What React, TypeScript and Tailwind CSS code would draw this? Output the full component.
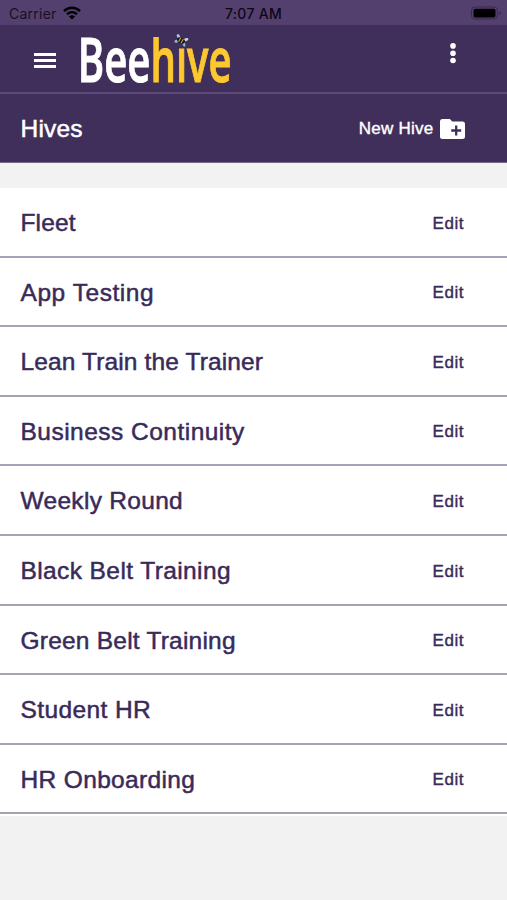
type Hive = { name: string; spacing: string };

const hives: Hive[] = [
  { name: "Fleet", spacing: "tracking-[0.150px]" },
  { name: "App Testing", spacing: "tracking-[0.550px]" },
  { name: "Lean Train the Trainer", spacing: "tracking-[0.130px]" },
  { name: "Business Continuity", spacing: "tracking-[0.480px]" },
  { name: "Weekly Round", spacing: "tracking-[0.3px]" },
  { name: "Black Belt Training", spacing: "tracking-[0.4px]" },
  { name: "Green Belt Training", spacing: "tracking-[0.220px]" },
  { name: "Student HR", spacing: "tracking-[0.4px]" },
  { name: "HR Onboarding", spacing: "tracking-[0.350px]" },
];

function StatusBar() {
  return (
    <div className="flex h-[25px] items-center justify-between bg-[#54406f] pt-[2px] font-['Inter',sans-serif] text-[14px] leading-none text-[#17101f]">
      <div className="flex w-[160px] items-center gap-[6px] pl-[9px]">
        <span className="tracking-[0.250px]">Carrier</span>
        <svg className="-mt-px h-[14px] w-[18px]" viewBox="0 0 18 14" fill="none" stroke="#000" strokeWidth="2.500">
          <path d="M1 5.2C5.6.7 12.4.7 17 5.2" />
          <path d="M4 8.4c2.9-2.8 7.100-2.800 10 0" />
          <path d="M9 13.500 5.900 10.400c1.800-1.600 4.400-1.600 6.200 0z" fill="#000" stroke="none" />
        </svg>
      </div>
      <span className="font-medium tracking-[0.3px] text-[#0d0714]">7:07 AM</span>
      <div className="flex w-[160px] justify-end pr-[5px]">
        <svg className="-mt-px h-[14px] w-[32px]" viewBox="0 0 32 14">
          <rect x="1.500" y="1" width="26" height="12" rx="3.500" fill="none" stroke="#38284d" />
          <rect x="3.500" y="2.700" width="22" height="8.800" rx="1.800" fill="#000" />
          <path d="M29.500 5v4c2-.8 2-3.200 0-4z" fill="#38284d" />
        </svg>
      </div>
    </div>
  );
}

function Logo() {
  return (
    <svg
      className="h-[66px] w-[156px] overflow-visible"
      viewBox="0 0 156 66"
      fontFamily="'Open Sans', 'Noto Sans', sans-serif"
      fontSize="61.500"
      fontWeight="600"
      strokeWidth="1"
    >
      {/* The wordmark's ascenders are trimmed level with its capital */}
      <clipPath id="cap-height">
        <rect x="-4" y="12" width="164" height="50" />
      </clipPath>
      <text x="-.3" y="56.500" textLength="154" lengthAdjust="spacingAndGlyphs" clipPath="url(#cap-height)">
        <tspan fill="#fff" stroke="#fff">Bee</tspan>
        <tspan fill="#fdc72f" stroke="#fdc72f">hıve</tspan>
      </text>
      <g transform="translate(103 15.500) rotate(28)">
        <ellipse cx="-4" cy="-2.300" rx="1.500" ry="2.600" fill="#a6cae3" transform="rotate(-55 -4 -2.300)" />
        <ellipse cx="4" cy="-3" rx="1.500" ry="2.600" fill="#c5d9e7" transform="rotate(40 4 -3)" />
        <ellipse cx="-3.500" cy="2.500" rx="1.400" ry="2.400" fill="#8db8d6" transform="rotate(45 -3.500 2.500)" />
        <ellipse cx="4.500" cy="2" rx="1.300" ry="2.300" fill="#8db8d6" transform="rotate(-45 4.500 2)" />
        <ellipse rx="4.200" ry="2.800" fill="#171923" />
        <path d="M-1.500-2.300v4.600M1.300-2.400v4.800" stroke="#dcac2c" strokeWidth="1" />
      </g>
    </svg>
  );
}

function Header() {
  return (
    <header className="flex h-[69px] items-start border-b-2 border-[#5c4b76] bg-[#412f5b]">
      <button aria-label="Menu" className="mt-[28px] ml-[34px] flex w-[22px] flex-col gap-[3px]">
        <span className="h-[3px] bg-white" />
        <span className="h-[3px] bg-white" />
        <span className="h-[3px] bg-white" />
      </button>
      <div className="ml-[22px]">
        <Logo />
      </div>
      <button aria-label="More" className="mt-[18px] mr-[51px] ml-auto">
        <svg className="h-[21px] w-[6px]" viewBox="0 0 6 21" fill="#fff">
          <circle cx="3" cy="2.900" r="2.800" />
          <circle cx="3" cy="10.200" r="2.800" />
          <circle cx="3" cy="17.500" r="2.800" />
        </svg>
      </button>
    </header>
  );
}

function TitleBar() {
  return (
    <div className="flex h-[69px] items-center justify-between border-b border-[#766989] bg-[#412f5b] pr-[42px] pl-[20.500px] text-white">
      <h1 className="pt-[2px] text-[24.500px] tracking-[0.2px] [-webkit-text-stroke:0.500px]">Hives</h1>
      <button className="flex items-center gap-[6.500px]">
        <span className="pt-[2px] text-[17px] tracking-[0.250px] [-webkit-text-stroke:0.400px]">New Hive</span>
        <svg className="mt-[2px] h-[20px] w-[25px]" viewBox="0 0 25 20">
          <path d="M2.500 0h7.300L12.300 2.500H22.500Q25 2.500 25 5v12.500Q25 20 22.500 20h-20Q0 20 0 17.500v-15Q0 0 2.500 0z" fill="#fff" />
          <path d="M16.200 6.500v10M11.200 11.500h10" stroke="#412f5b" strokeWidth="2.300" />
        </svg>
      </button>
    </div>
  );
}

export default function App() {
  return (
    <div className="min-h-screen bg-[#f2f2f2] font-['Liberation_Sans',Arial,sans-serif]">
      <StatusBar />
      <Header />
      <TitleBar />
      <ul className="mt-[25px] border-b-2 border-white text-[#382b5a]">
        {hives.map(({ name, spacing }) => (
          <li key={name} className="flex h-[69.620px] items-center justify-between border-b-2 border-[#a7a1b8] bg-white pt-[3px] pr-[43px] pl-[20.500px]">
            <span className={`text-[24.500px] [-webkit-text-stroke:0.500px] ${spacing}`}>{name}</span>
            <button className="text-[17px] tracking-[0.550px] [-webkit-text-stroke:0.400px]">Edit</button>
          </li>
        ))}
      </ul>
    </div>
  );
}
